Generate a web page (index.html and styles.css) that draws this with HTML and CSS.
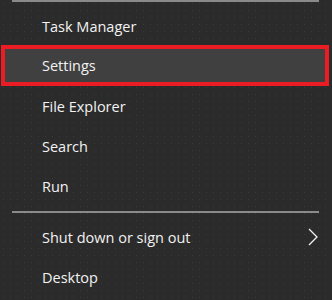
FILE: index.html
```html
<!DOCTYPE html>
<html lang="en">
<head>
    <meta charset="UTF-8">
    <title>Quick Link Menu</title>
    <link rel="stylesheet" href="styles.css">
</head>
<body>
    <div class="menu">
        <div class="divider top"></div>
        <div class="item">Task Manager</div>
        <div class="item selected">Settings</div>
        <div class="item">File Explorer</div>
        <div class="item">Search</div>
        <div class="item">Run</div>
        <div class="divider"></div>
        <div class="item has-sub">
            <span>Shut down or sign out</span>
            <svg class="chevron" width="12" height="18" viewBox="0 0 12 18">
                <polyline points="2,1 10,9 2,17" fill="none" stroke="#f2f2f2" stroke-width="1.3"/>
            </svg>
        </div>
        <div class="item">Desktop</div>
    </div>
</body>
</html>
```

FILE: styles.css
```css
body {
    margin: 0;
    background-color: #2b2b2b;
    font-family: "Open Sans", "Noto Sans", sans-serif;
}
.menu {
    width: 332px;
    height: 300px;
    background-color: #2b2b2b;
    background-image: radial-gradient(circle, rgba(255, 255, 255, 0.07) 0.6px, transparent 1px);
    background-size: 7px 7px;
}
.divider {
    height: 2px;
    margin: 5px 13px 4px 12px;
    background-color: #8a8a8a;
}
.divider.top {
    margin-top: 0;
    margin-bottom: 4px;
}
.item {
    height: 40px;
    box-sizing: border-box;
    padding-left: 42px;
    display: flex;
    align-items: center;
    color: #f2f2f2;
    font-size: 14.5px;
}
.selected {
    height: 41px;
    margin: -1px 3px 0 1px;
    padding-left: 37px;
    border: 4px solid #ec1c24;
    background-color: #404040;
}
.has-sub {
    justify-content: space-between;
    padding-right: 13px;
}
.chevron {
    display: block;
}
```
